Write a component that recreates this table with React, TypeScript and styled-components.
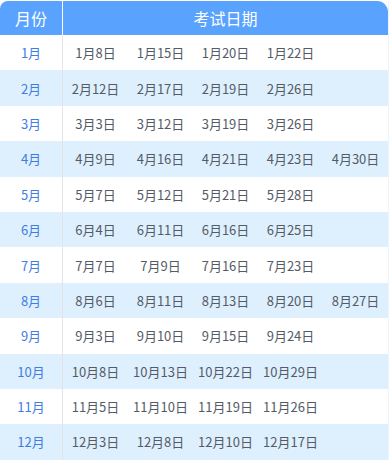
import React from "react";
import styled, { createGlobalStyle } from "styled-components";

const GlobalStyle = createGlobalStyle`
  html, body {
    margin: 0;
    padding: 0;
    background: #ffffff;
  }
  body {
    font-family: "Noto Sans CJK SC", "Noto Sans", sans-serif;
  }
`;

const Page = styled.div`
  padding-top: 1px;
`;

const Table = styled.div`
  width: 388px;
  border-right: 1px solid #edf3fa;
`;

const HeaderRow = styled.div`
  display: grid;
  grid-template-columns: 63px 1fr;
  height: 34px;
  background: #59a3fe;
  border-radius: 8px 11px 0 0;
  color: #ffffff;
  font-size: 16px;
`;

const HeaderCell = styled.div<{ $divider?: boolean }>`
  display: flex;
  align-items: center;
  justify-content: center;
  border-right: ${({ $divider }) => ($divider ? "1px solid #ffffff" : "none")};
`;

const Row = styled.div<{ $striped: boolean }>`
  display: grid;
  grid-template-columns: 63px repeat(5, 1fr);
  height: 35.4px;
  background: ${({ $striped }) => ($striped ? "#def0fe" : "#ffffff")};
  font-size: 13px;
`;

const MonthCell = styled.div`
  display: flex;
  align-items: center;
  justify-content: center;
  color: #3f7de2;
  border-right: 1px solid #e2e4e8;
`;

const DateCell = styled.div`
  display: flex;
  align-items: center;
  justify-content: center;
  color: #555b66;
  white-space: nowrap;
`;

const schedule: [string, string[]][] = [
  ["1月", ["1月8日", "1月15日", "1月20日", "1月22日"]],
  ["2月", ["2月12日", "2月17日", "2月19日", "2月26日"]],
  ["3月", ["3月3日", "3月12日", "3月19日", "3月26日"]],
  ["4月", ["4月9日", "4月16日", "4月21日", "4月23日", "4月30日"]],
  ["5月", ["5月7日", "5月12日", "5月21日", "5月28日"]],
  ["6月", ["6月4日", "6月11日", "6月16日", "6月25日"]],
  ["7月", ["7月7日", "7月9日", "7月16日", "7月23日"]],
  ["8月", ["8月6日", "8月11日", "8月13日", "8月20日", "8月27日"]],
  ["9月", ["9月3日", "9月10日", "9月15日", "9月24日"]],
  ["10月", ["10月8日", "10月13日", "10月22日", "10月29日"]],
  ["11月", ["11月5日", "11月10日", "11月19日", "11月26日"]],
  ["12月", ["12月3日", "12月8日", "12月10日", "12月17日"]],
];

export default function App() {
  return (
    <>
      <GlobalStyle />
      <Page>
        <Table>
          <HeaderRow>
            <HeaderCell $divider>月份</HeaderCell>
            <HeaderCell>考试日期</HeaderCell>
          </HeaderRow>
          {schedule.map(([month, dates], i) => (
            <Row key={month} $striped={i % 2 === 1}>
              <MonthCell>{month}</MonthCell>
              {Array.from({ length: 5 }, (_, j) => (
                <DateCell key={j}>{dates[j] ?? ""}</DateCell>
              ))}
            </Row>
          ))}
        </Table>
      </Page>
    </>
  );
}
